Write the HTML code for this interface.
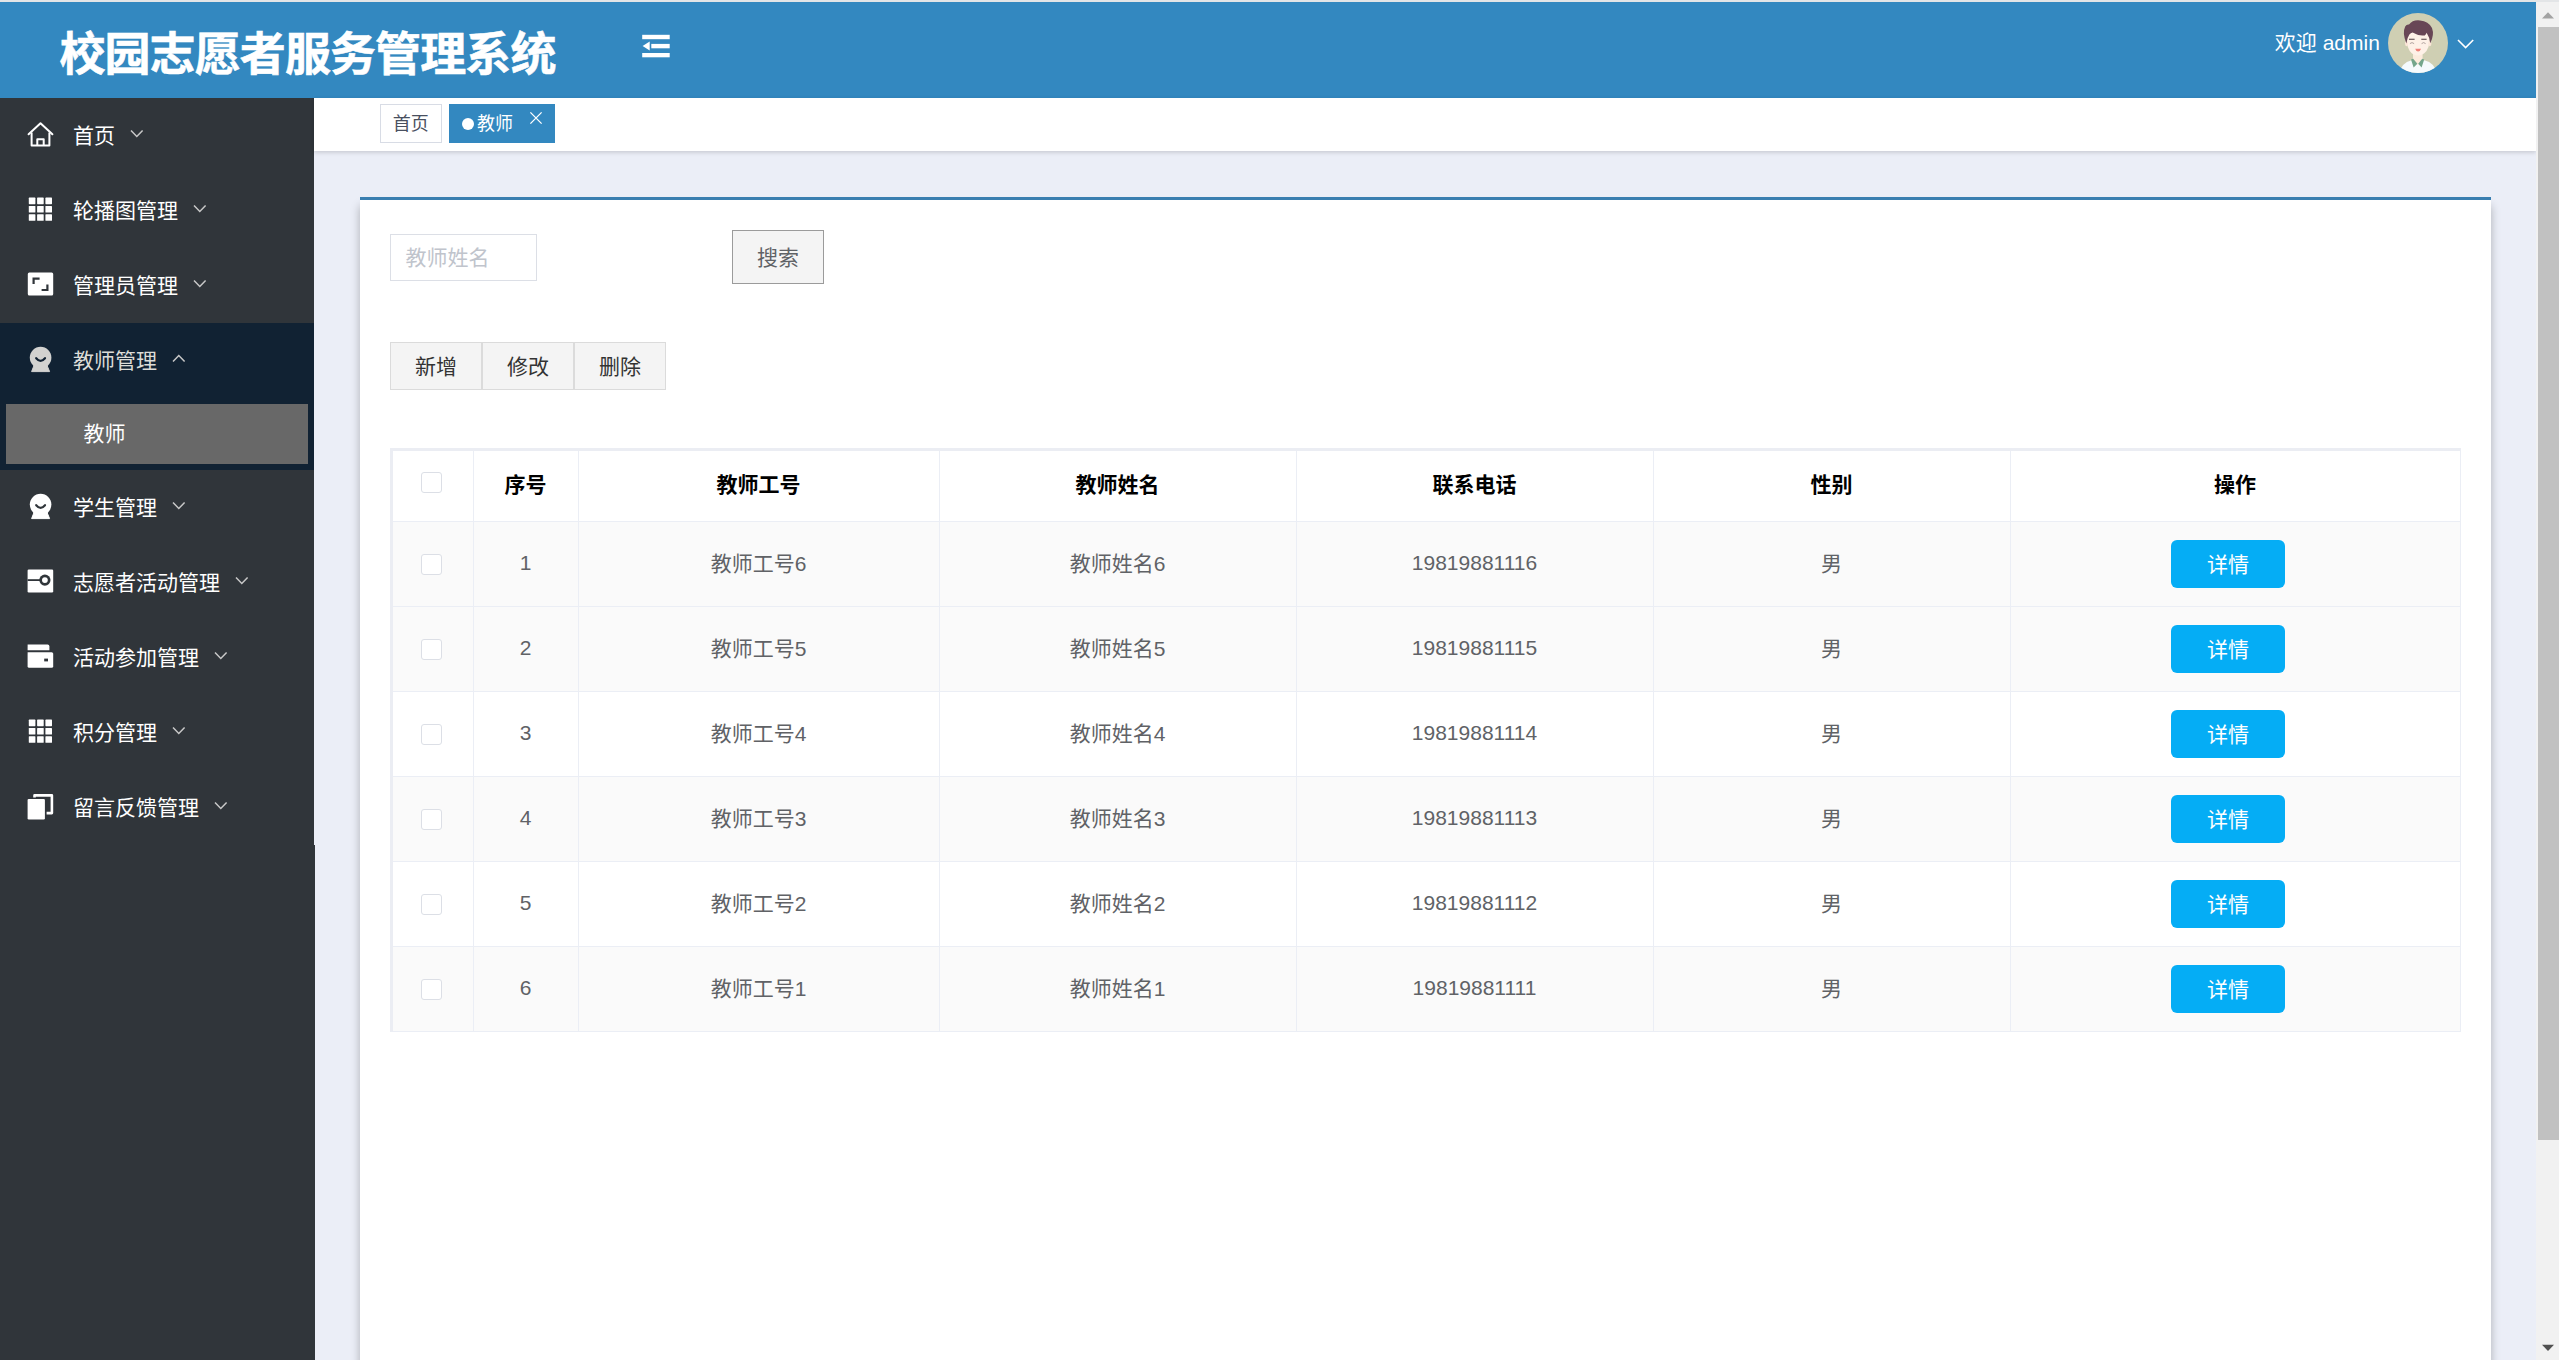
<!DOCTYPE html>
<html lang="zh-CN">
<head>
<meta charset="utf-8">
<title>校园志愿者服务管理系统</title>
<style>
*{box-sizing:border-box;margin:0;padding:0}
html,body{width:2559px;height:1360px;overflow:hidden;background:#ebeef7}
body{position:relative;font-family:"Liberation Sans","Noto Sans CJK SC",sans-serif;font-size:21px;color:#606266}
.abs{position:absolute}
.t{position:absolute;white-space:nowrap;line-height:1}
/* top strip */
#strip{left:0;top:0;width:2559px;height:2px;background:#e3e5e7}
/* header */
#hdr{left:0;top:2px;width:2536px;height:96px;background:#3388c0}
#title{left:59.4px;top:31px;font-size:46px;font-weight:700;color:#fff;letter-spacing:-0.9px;-webkit-text-stroke:0.55px #fff}
#welcome{left:2274.8px;top:31.5px;font-size:21px;color:#fff}
/* sidebar */
#side{left:0;top:98px;width:314px;height:1262px;background:#30353a}
#side2{left:314px;top:845px;width:1px;height:515px;background:#30353a}
#navy{left:0;top:323px;width:314px;height:147px;background:#112233}
#sub{left:6px;top:404px;width:302px;height:60px;background:#686868}
.mi{position:absolute;left:73px;font-size:21px;color:#fff;white-space:nowrap;line-height:1}
/* tags */
#tags{left:314px;top:98px;width:2222px;height:53px;background:#fff;box-shadow:0 2px 4px rgba(0,0,0,.12),0 0 4px rgba(0,0,0,.04)}
#tag1{left:380px;top:104px;width:62px;height:39px;border:1px solid #d8dce5;background:#fff}
#tag2{left:449px;top:104px;width:106px;height:39px;background:#3388c0}
/* card */
#card{left:360px;top:197px;width:2131px;height:1200px;background:#fff;border-top:3px solid #397eb0;box-shadow:0 9px 9px rgba(0,0,0,.27)}
/* scrollbar */
#sb{left:2536px;top:2px;width:23px;height:1358px;background:#f1f1f1}
#thumb{left:2538px;top:27px;width:21px;height:1113px;background:#c1c1c1}

/* toolbar */
#inp{left:390px;top:234px;width:147px;height:47px;border:1px solid #dcdfe6;background:#fff}
#search{left:732px;top:230px;width:92px;height:54px;background:#f4f4f4;border:1px solid #9b9b9b}
.btn{position:absolute;top:342px;width:92px;height:48px;background:#f4f4f4;border:1px solid #dbdbdb}
/* table */
#tbl{left:390px;top:448px;width:2071px;height:584px;background:#fff;border-left:3px solid #ebedf3;border-top:3px solid #ebedf3;border-right:1px solid #ebeef5;border-bottom:1px solid #ebeef5}
.row{position:absolute;left:393px;width:2067px;height:85px;border-bottom:1px solid #ebeef5}
.stripe{background:#fafafa}
.vl{position:absolute;top:451px;width:1px;height:580px;background:#ebeef5}
.cb{position:absolute;left:421px;width:21px;height:21px;border:1px solid #dcdfe6;border-radius:3px;background:#fff}
.th{position:absolute;top:474px;font-size:21px;font-weight:700;color:#000;white-space:nowrap;line-height:1;transform:translateX(-50%)}
.td{position:absolute;font-size:21px;color:#606266;white-space:nowrap;line-height:1;transform:translateX(-50%)}
.dbtn{position:absolute;left:2171px;width:114px;height:48px;border-radius:6px;background:#05adf5;color:#fff;font-size:21px;text-align:center;line-height:49px}
</style>
</head>
<body>
<div id="strip" class="abs"></div>
<div id="hdr" class="abs"></div>
<div id="title" class="t">校园志愿者服务管理系统</div>
<div id="welcome" class="t">欢迎 admin</div>


<svg class="abs" style="left:640px;top:32px" width="32" height="28" viewBox="0 0 32 28">
<rect x="2.2" y="2.8" width="27.5" height="4.4" fill="#fff"/>
<rect x="11.3" y="11.9" width="18.4" height="4.4" fill="#fff"/>
<rect x="2.2" y="21" width="27.5" height="4.3" fill="#fff"/>
<path d="M2.6 13.9 L9.7 9.4 V18.5 Z" fill="#fff"/>
</svg>
<svg class="abs" style="left:2388px;top:13px" width="60" height="60" viewBox="0 0 60 60">
<defs><clipPath id="avc"><circle cx="30" cy="30" r="30"/></clipPath></defs>
<g clip-path="url(#avc)">
<rect width="60" height="60" fill="#cfcfb3"/>
<path d="M11 62 Q13 50 23 47.6 L30 46 L37 47.6 Q47 50 49 62 Z" fill="#f5fafd"/>
<path d="M25 39 H34.6 V47.5 L30 52 L25 47.5 Z" fill="#fcebdc"/>
<path d="M23 46.6 L25.2 45.8 L29.4 50.8 L25.6 54.6 Z" fill="#74a68c"/>
<path d="M36.2 46.6 L34.2 45.8 L30.2 50.8 L33.6 54.6 Z" fill="#74a68c"/>
<path d="M18.8 24 Q18.4 36 24 40.5 Q30 44.6 36 40.5 Q42 36 41.6 24 Q41 16 30 16 Q19.4 16 18.8 24 Z" fill="#fef1e7"/>
<ellipse cx="18.6" cy="30.6" rx="1.6" ry="2.6" fill="#fce6d8"/>
<ellipse cx="41.8" cy="30.6" rx="1.6" ry="2.6" fill="#fce6d8"/>
<path d="M18.4 30.4 Q14 20 17.2 13.6 Q18.6 11.2 21 11.6 Q24.6 6.6 32 7.4 Q40.6 8 44 15 Q46.6 22 42.2 30.2 Q42 25 38.6 19.8 Q38 21.6 36.8 22.4 Q31 23.4 24.6 19.6 Q22.6 20 21.4 21.6 Q19 25 18.4 30.4 Z" fill="#684656"/>
<path d="M21 26.2 H26.6" fill="none" stroke="#4f3c40" stroke-width="1.1"/>
<path d="M33.3 26.2 H38.6" fill="none" stroke="#4f3c40" stroke-width="1.1"/>
<path d="M21.9 30.6 Q24 28.6 26.1 30.6" fill="none" stroke="#a89a96" stroke-width="0.9"/>
<path d="M33.6 30.6 Q35.6 28.6 37.6 30.6" fill="none" stroke="#a89a96" stroke-width="0.9"/>
<path d="M27.2 35.7 H33.1 Q32 38.6 30.1 38.6 Q28.2 38.6 27.2 35.7 Z" fill="#ef8078"/>
</g>
</svg>
<svg class="abs" style="left:2456px;top:38px" width="20" height="12" viewBox="0 0 20 12"><path d="M2 2 L9.6 9.6 L17.2 2" fill="none" stroke="#fff" stroke-width="1.6"/></svg>

<div id="side" class="abs"></div>
<div id="side2" class="abs"></div>
<div id="navy" class="abs"></div>
<div id="sub" class="abs"></div>

<svg class="abs" style="left:26px;top:121.1px" width="28" height="28" viewBox="0 0 28 28"><path d="M2.6 13.2 L14.5 2.2 L26.4 13.2" fill="none" stroke="#fff" stroke-width="2" stroke-linejoin="round" stroke-linecap="round"/><path d="M5.6 11.5 V24.6 H23.4 V11.5" fill="none" stroke="#fff" stroke-width="2" stroke-linejoin="round"/><path d="M11.3 24.6 V18.2 H17.7 V24.6" fill="none" stroke="#fff" stroke-width="2" stroke-linejoin="round"/></svg>
<div class="mi" style="top:125.0px;color:#fff">首页</div>
<svg class="abs" style="left:130px;top:129.0px" width="14" height="9" viewBox="0 0 14 9"><path d="M1 1.4 L6.8 7.4 L12.6 1.4" fill="none" stroke="#c8c8c8" stroke-width="1.5"/></svg>
<svg class="abs" style="left:26px;top:195.2px" width="28" height="28" viewBox="0 0 28 28"><rect x="2.8" y="2.6" width="6.6" height="6.6" rx="0.6" fill="#fff"/><rect x="11.1" y="2.6" width="6.6" height="6.6" rx="0.6" fill="#fff"/><rect x="19.4" y="2.6" width="6.6" height="6.6" rx="0.6" fill="#fff"/><rect x="2.8" y="10.9" width="6.6" height="6.6" rx="0.6" fill="#fff"/><rect x="11.1" y="10.9" width="6.6" height="6.6" rx="0.6" fill="#fff"/><rect x="19.4" y="10.9" width="6.6" height="6.6" rx="0.6" fill="#fff"/><rect x="2.8" y="19.2" width="6.6" height="6.6" rx="0.6" fill="#fff"/><rect x="11.1" y="19.2" width="6.6" height="6.6" rx="0.6" fill="#fff"/><rect x="19.4" y="19.2" width="6.6" height="6.6" rx="0.6" fill="#fff"/></svg>
<div class="mi" style="top:200.0px;color:#fff">轮播图管理</div>
<svg class="abs" style="left:193px;top:204.0px" width="14" height="9" viewBox="0 0 14 9"><path d="M1 1.4 L6.8 7.4 L12.6 1.4" fill="none" stroke="#c8c8c8" stroke-width="1.5"/></svg>
<svg class="abs" style="left:26px;top:270.2px" width="28" height="28" viewBox="0 0 28 28"><rect x="1.8" y="2.6" width="25.4" height="23" rx="1.5" fill="#fff"/><path d="M7.6 14 V8.6 H13.6" fill="none" stroke="#30353a" stroke-width="2.2"/><path d="M21.4 14.4 V20 H15.6" fill="none" stroke="#30353a" stroke-width="2.2"/></svg>
<div class="mi" style="top:275.0px;color:#fff">管理员管理</div>
<svg class="abs" style="left:193px;top:279.0px" width="14" height="9" viewBox="0 0 14 9"><path d="M1 1.4 L6.8 7.4 L12.6 1.4" fill="none" stroke="#c8c8c8" stroke-width="1.5"/></svg>
<svg class="abs" style="left:26px;top:346.1px" width="28" height="28" viewBox="0 0 28 28"><path d="M9.2 16.5 L19.8 16.5 L23.6 25.6 L5.6 25.6 Z" fill="#d2d2d0" stroke="#d2d2d0" stroke-width="1" stroke-linejoin="round"/><circle cx="14.6" cy="11.6" r="10.8" fill="#d2d2d0"/><path d="M10.2 12.2 Q14.6 17.4 19 12.2" fill="none" stroke="#112233" stroke-width="2.2" stroke-linecap="round"/></svg>
<div class="mi" style="top:350.0px;color:#dcdcd8">教师管理</div>
<svg class="abs" style="left:172px;top:353.5px" width="14" height="9" viewBox="0 0 14 9"><path d="M1 7.6 L6.8 1.6 L12.6 7.6" fill="none" stroke="#c8c8c8" stroke-width="1.5"/></svg>
<svg class="abs" style="left:26px;top:493.1px" width="28" height="28" viewBox="0 0 28 28"><path d="M9.2 16.5 L19.8 16.5 L23.6 25.6 L5.6 25.6 Z" fill="#fff" stroke="#fff" stroke-width="1" stroke-linejoin="round"/><circle cx="14.6" cy="11.6" r="10.8" fill="#fff"/><path d="M10.2 12.2 Q14.6 17.4 19 12.2" fill="none" stroke="#30353a" stroke-width="2.2" stroke-linecap="round"/></svg>
<div class="mi" style="top:497.0px;color:#fff">学生管理</div>
<svg class="abs" style="left:172px;top:501.0px" width="14" height="9" viewBox="0 0 14 9"><path d="M1 1.4 L6.8 7.4 L12.6 1.4" fill="none" stroke="#c8c8c8" stroke-width="1.5"/></svg>
<svg class="abs" style="left:26px;top:567.2px" width="28" height="28" viewBox="0 0 28 28"><rect x="1.6" y="2.5" width="25.6" height="23" rx="1.2" fill="#fff"/><rect x="1.6" y="12.2" width="13" height="1.8" fill="#30353a"/><circle cx="18.9" cy="13.1" r="5.6" fill="#30353a"/><circle cx="18.9" cy="13.1" r="2.9" fill="#fff"/></svg>
<div class="mi" style="top:572.0px;color:#fff">志愿者活动管理</div>
<svg class="abs" style="left:235px;top:576.0px" width="14" height="9" viewBox="0 0 14 9"><path d="M1 1.4 L6.8 7.4 L12.6 1.4" fill="none" stroke="#c8c8c8" stroke-width="1.5"/></svg>
<svg class="abs" style="left:26px;top:642.2px" width="28" height="28" viewBox="0 0 28 28"><path d="M1.6 2.6 H21.6 Q23.4 2.6 23.4 4.4 V8.2 H1.6 Z" fill="#fff"/><path d="M1.6 10.2 H25.6 Q27.2 10.2 27.2 11.8 V24.2 Q27.2 25.8 25.6 25.8 H3.2 Q1.6 25.8 1.6 24.2 Z" fill="#fff"/><rect x="18.2" y="16.6" width="3.8" height="2.8" fill="#30353a"/></svg>
<div class="mi" style="top:647.0px;color:#fff">活动参加管理</div>
<svg class="abs" style="left:214px;top:651.0px" width="14" height="9" viewBox="0 0 14 9"><path d="M1 1.4 L6.8 7.4 L12.6 1.4" fill="none" stroke="#c8c8c8" stroke-width="1.5"/></svg>
<svg class="abs" style="left:26px;top:717.2px" width="28" height="28" viewBox="0 0 28 28"><rect x="2.8" y="2.6" width="6.6" height="6.6" rx="0.6" fill="#fff"/><rect x="11.1" y="2.6" width="6.6" height="6.6" rx="0.6" fill="#fff"/><rect x="19.4" y="2.6" width="6.6" height="6.6" rx="0.6" fill="#fff"/><rect x="2.8" y="10.9" width="6.6" height="6.6" rx="0.6" fill="#fff"/><rect x="11.1" y="10.9" width="6.6" height="6.6" rx="0.6" fill="#fff"/><rect x="19.4" y="10.9" width="6.6" height="6.6" rx="0.6" fill="#fff"/><rect x="2.8" y="19.2" width="6.6" height="6.6" rx="0.6" fill="#fff"/><rect x="11.1" y="19.2" width="6.6" height="6.6" rx="0.6" fill="#fff"/><rect x="19.4" y="19.2" width="6.6" height="6.6" rx="0.6" fill="#fff"/></svg>
<div class="mi" style="top:722.0px;color:#fff">积分管理</div>
<svg class="abs" style="left:172px;top:726.0px" width="14" height="9" viewBox="0 0 14 9"><path d="M1 1.4 L6.8 7.4 L12.6 1.4" fill="none" stroke="#c8c8c8" stroke-width="1.5"/></svg>
<svg class="abs" style="left:26px;top:792.2px" width="28" height="28" viewBox="0 0 28 28"><path d="M8.5 3.4 H25.9 V21.1 H8.5 Z" fill="none" stroke="#fff" stroke-width="2.6" stroke-linejoin="round"/><rect x="1.6" y="5.4" width="19" height="22" rx="1.2" fill="#30353a"/><rect x="1.6" y="6.9" width="17.3" height="20.5" rx="1.2" fill="#fff"/></svg>
<div class="mi" style="top:797.0px;color:#fff">留言反馈管理</div>
<svg class="abs" style="left:214px;top:801.0px" width="14" height="9" viewBox="0 0 14 9"><path d="M1 1.4 L6.8 7.4 L12.6 1.4" fill="none" stroke="#c8c8c8" stroke-width="1.5"/></svg>
<div class="mi" style="left:83.6px;top:422.5px">教师</div>

<div id="tags" class="abs"></div>
<div id="tag1" class="abs"></div>
<div id="tag2" class="abs"></div>


<div class="t" style="left:392.8px;top:115.2px;font-size:18px;color:#495060">首页</div>
<div class="abs" style="left:462px;top:118px;width:12px;height:12px;border-radius:50%;background:#fff"></div>
<div class="t" style="left:477px;top:114.9px;font-size:18px;color:#fff">教师</div>
<svg class="abs" style="left:529px;top:111px" width="14" height="14" viewBox="0 0 14 14"><path d="M1.4 1.4 L12.6 12.6 M12.6 1.4 L1.4 12.6" fill="none" stroke="#fff" stroke-width="1.3"/></svg>

<div id="card" class="abs"></div>
<div id="inp" class="abs"></div>
<div class="t" style="left:405.6px;top:247px;font-size:21px;color:#c0c4cc">教师姓名</div>
<div id="search" class="abs"></div>
<div class="t" style="left:757px;top:246.5px;font-size:21px;color:#5f6266">搜索</div>
<div class="btn" style="left:390px"></div>
<div class="t" style="left:415px;top:355.5px;font-size:21px;color:#333">新增</div>
<div class="btn" style="left:482px"></div>
<div class="t" style="left:507px;top:355.5px;font-size:21px;color:#333">修改</div>
<div class="btn" style="left:574px"></div>
<div class="t" style="left:599px;top:355.5px;font-size:21px;color:#333">删除</div>
<div id="tbl" class="abs"></div>
<div class="row" style="top:451px;height:71px"></div>
<div class="row stripe" style="top:522px;height:85px"></div>
<div class="row stripe" style="top:607px;height:85px"></div>
<div class="row" style="top:692px;height:85px"></div>
<div class="row stripe" style="top:777px;height:85px"></div>
<div class="row" style="top:862px;height:85px"></div>
<div class="row stripe" style="top:947px;height:84px;border-bottom:0"></div>
<div class="vl" style="left:473px"></div>
<div class="vl" style="left:578px"></div>
<div class="vl" style="left:939px"></div>
<div class="vl" style="left:1296px"></div>
<div class="vl" style="left:1653px"></div>
<div class="vl" style="left:2010px"></div>
<div class="cb" style="top:472px"></div>
<div class="th" style="left:525.5px">序号</div>
<div class="th" style="left:758.5px">教师工号</div>
<div class="th" style="left:1117.5px">教师姓名</div>
<div class="th" style="left:1474.5px">联系电话</div>
<div class="th" style="left:1831.5px">性别</div>
<div class="th" style="left:2235.0px">操作</div>
<div class="cb" style="top:554px"></div>
<div class="td" style="left:525.5px;top:552.3px">1</div>
<div class="td" style="left:758.5px;top:553.0px">教师工号6</div>
<div class="td" style="left:1117.5px;top:553.0px">教师姓名6</div>
<div class="td" style="left:1474.5px;top:552.3px">19819881116</div>
<div class="td" style="left:1831.5px;top:553.0px">男</div>
<div class="dbtn" style="top:540px">详情</div>
<div class="cb" style="top:639px"></div>
<div class="td" style="left:525.5px;top:637.3px">2</div>
<div class="td" style="left:758.5px;top:638.0px">教师工号5</div>
<div class="td" style="left:1117.5px;top:638.0px">教师姓名5</div>
<div class="td" style="left:1474.5px;top:637.3px">19819881115</div>
<div class="td" style="left:1831.5px;top:638.0px">男</div>
<div class="dbtn" style="top:625px">详情</div>
<div class="cb" style="top:724px"></div>
<div class="td" style="left:525.5px;top:722.3px">3</div>
<div class="td" style="left:758.5px;top:723.0px">教师工号4</div>
<div class="td" style="left:1117.5px;top:723.0px">教师姓名4</div>
<div class="td" style="left:1474.5px;top:722.3px">19819881114</div>
<div class="td" style="left:1831.5px;top:723.0px">男</div>
<div class="dbtn" style="top:710px">详情</div>
<div class="cb" style="top:809px"></div>
<div class="td" style="left:525.5px;top:807.3px">4</div>
<div class="td" style="left:758.5px;top:808.0px">教师工号3</div>
<div class="td" style="left:1117.5px;top:808.0px">教师姓名3</div>
<div class="td" style="left:1474.5px;top:807.3px">19819881113</div>
<div class="td" style="left:1831.5px;top:808.0px">男</div>
<div class="dbtn" style="top:795px">详情</div>
<div class="cb" style="top:894px"></div>
<div class="td" style="left:525.5px;top:892.3px">5</div>
<div class="td" style="left:758.5px;top:893.0px">教师工号2</div>
<div class="td" style="left:1117.5px;top:893.0px">教师姓名2</div>
<div class="td" style="left:1474.5px;top:892.3px">19819881112</div>
<div class="td" style="left:1831.5px;top:893.0px">男</div>
<div class="dbtn" style="top:880px">详情</div>
<div class="cb" style="top:979px"></div>
<div class="td" style="left:525.5px;top:977.3px">6</div>
<div class="td" style="left:758.5px;top:978.0px">教师工号1</div>
<div class="td" style="left:1117.5px;top:978.0px">教师姓名1</div>
<div class="td" style="left:1474.5px;top:977.3px">19819881111</div>
<div class="td" style="left:1831.5px;top:978.0px">男</div>
<div class="dbtn" style="top:965px">详情</div>

<div id="sb" class="abs"></div>
<div id="thumb" class="abs"></div>
<svg class="abs" style="left:2541px;top:11px" width="14" height="8" viewBox="0 0 14 8"><path d="M1 7.4 L7 1.2 L13 7.4 Z" fill="#a3a3a3"/></svg>
<svg class="abs" style="left:2541px;top:1344.3px" width="14" height="8" viewBox="0 0 14 8"><path d="M1 0.8 L7 7 L13 0.8 Z" fill="#505050"/></svg>
</body>
</html>
